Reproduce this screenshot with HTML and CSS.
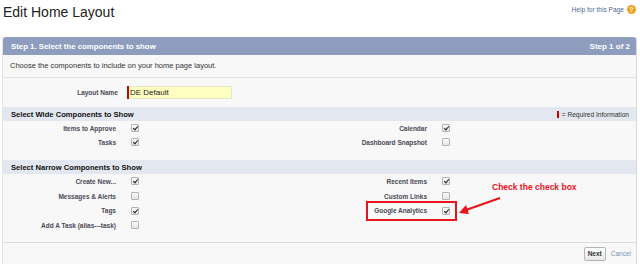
FILE: index.html
```html
<!DOCTYPE html>
<html lang="en">
<head>
    <meta charset="UTF-8">
    <title>Edit Home Layout</title>
    <link rel="stylesheet" href="styles.css">
</head>
<body>
    <div class="page-head">
        <h1>Edit Home Layout</h1>
        <a class="help" href="#">Help for this Page <span class="help-icon">?</span></a>
    </div>

    <div class="panel">
        <div class="panel-head">
            <h2>Step 1. Select the components to show</h2>
            <span class="step">Step 1 of 2</span>
        </div>
        <div class="panel-desc">Choose the components to include on your home page layout.</div>

        <!-- layout name -->
        <div class="name-row">
            <label class="label" for="layoutName">Layout Name</label>
            <div class="required-input">
                <input type="text" id="layoutName" value="DE Default">
            </div>
        </div>

        <div class="section-head">
            <h3>Select Wide Components to Show</h3>
            <span class="req-note"><i class="req-bar"></i> = Required Information</span>
        </div>
        <div class="grid">
            <span class="label">Items to Approve</span><span class="data"><span class="cb on"></span></span>
            <span class="label">Calendar</span><span class="data"><span class="cb on"></span></span>
            <span class="label">Tasks</span><span class="data"><span class="cb on"></span></span>
            <span class="label">Dashboard Snapshot</span><span class="data"><span class="cb"></span></span>
        </div>

        <div class="section-head">
            <h3>Select Narrow Components to Show</h3>
        </div>
        <div class="grid narrow">
            <span class="label">Create New...</span><span class="data"><span class="cb on"></span></span>
            <span class="label">Recent Items</span><span class="data"><span class="cb on"></span></span>
            <span class="label">Messages &amp; Alerts</span><span class="data"><span class="cb"></span></span>
            <span class="label">Custom Links</span><span class="data"><span class="cb"></span></span>
            <span class="label">Tags</span><span class="data"><span class="cb on"></span></span>
            <span class="label">Google Analytics</span><span class="data"><span class="cb on"></span></span>
            <span class="label">Add A Task (alias---task)</span><span class="data"><span class="cb"></span></span>

            <!-- annotation -->
            <div class="callout-box"></div>
            <svg class="callout-arrow" width="44" height="20" viewBox="0 0 44 20">
                <line x1="42" y1="2" x2="8" y2="14" stroke="#e8141c" stroke-width="2"/>
                <polygon points="1,17 8,9 11,18" fill="#e8141c"/>
            </svg>
            <span class="callout-text">Check the check box</span>
        </div>

        <div class="panel-foot">
            <button class="btn">Next</button>
            <a class="cancel" href="#">Cancel</a>
        </div>
    </div>
</body>
</html>
```

FILE: styles.css
```css
body {
    margin: 0;
    background-color: #fff;
    font-family: "Liberation Sans", Arial, sans-serif;
    color: #333;
}
.page-head {
    display: flex;
    justify-content: space-between;
    height: 37px;
    padding: 0 4px 0 3px;
}
h1 {
    margin: 4px 0 0 0;
    font-size: 14px;
    font-weight: normal;
    line-height: 16px;
    color: #222;
}
.help {
    margin-top: 5px;
    display: flex;
    align-items: flex-start;
    gap: 3px;
    font-size: 6.6px;
    line-height: 9px;
    color: #4f6a98;
    text-decoration: none;
}
.help-icon {
    width: 9px;
    height: 9px;
    border-radius: 50%;
    background-color: #eda21f;
    color: #fff;
    font-size: 7px;
    font-weight: bold;
    line-height: 9px;
    text-align: center;
}
.panel {
    margin-left: 2px;
    width: 633px;
    background-color: #f8f8f8;
    border-right: 1px solid #dadada;
    border-left: 1px solid #e4e4e4;
}
.panel-head {
    display: flex;
    justify-content: space-between;
    align-items: center;
    height: 18px;
    padding: 0 6px 0 8px;
    background-color: #8e9dbe;
    border-radius: 3px 3px 0 0;
    color: #fff;
}
h2 {
    margin: 0;
    font-size: 7.8px;
    font-weight: bold;
}
.step {
    font-size: 8px;
    font-weight: bold;
}
.panel-desc {
    height: 22px;
    line-height: 22px;
    padding-left: 7px;
    font-size: 7.5px;
    color: #333;
    border-bottom: 1px solid #e3e3e3;
}
.label {
    padding-right: 6px;
    text-align: right;
    font-size: 6.5px;
    font-weight: bold;
    color: #4a4a56;
}
.name-row {
    display: grid;
    grid-template-columns: 119px 1fr;
    align-items: center;
    height: 29px;
}
.name-row .label {
    padding-right: 4px;
}
.required-input {
    display: flex;
    margin-left: 5px;
    width: 103px;
    height: 13px;
    border-left: 2px solid #c00;
}
.required-input input {
    display: block;
    box-sizing: border-box;
    width: 100%;
    height: 13px;
    margin: 0;
    padding: 0 0 0 1px;
    border: 1px solid #e6e6c8;
    border-left: none;
    outline: none;
    background-color: #ffffc2;
    font-family: "Liberation Sans", Arial, sans-serif;
    font-size: 8px;
    line-height: 11px;
    color: #222;
}
.section-head {
    display: flex;
    justify-content: space-between;
    align-items: center;
    height: 14px;
    padding: 0 7px 0 8px;
    background-color: #e3e7ef;
}
h3 {
    margin: 0;
    font-size: 7.6px;
    font-weight: bold;
    color: #111;
}
.req-note {
    display: flex;
    align-items: center;
    gap: 3px;
    font-size: 6.6px;
    color: #333;
}
.req-bar {
    width: 2px;
    height: 7px;
    background-color: #c00;
}
.grid {
    position: relative;
    display: grid;
    grid-template-columns: 119px 191px 120px 1fr;
    grid-auto-rows: 14px;
    align-items: center;
    padding-bottom: 11px;
}
.grid.narrow {
    grid-auto-rows: 14.7px;
    padding-bottom: 9px;
    border-bottom: 1px solid #dcdcdc;
}
.data {
    display: flex;
    align-items: center;
    padding-left: 9px;
}
.cb {
    position: relative;
    box-sizing: border-box;
    width: 8px;
    height: 8px;
    border: 1px solid #b4b4b4;
    border-radius: 1px;
    background: linear-gradient(#fafafa, #e4e4e4);
}
.cb.on::after {
    content: "";
    position: absolute;
    left: 2px;
    top: 0px;
    width: 2px;
    height: 4px;
    border-right: 1.3px solid #222;
    border-bottom: 1.3px solid #222;
    transform: rotate(40deg);
}
.callout-box {
    position: absolute;
    left: 363px;
    top: 27px;
    width: 87px;
    height: 16px;
    border: 2px solid #e8141c;
}
.callout-arrow {
    position: absolute;
    left: 455px;
    top: 22px;
}
.callout-text {
    position: absolute;
    left: 489px;
    top: 8px;
    font-size: 8.5px;
    font-weight: bold;
    color: #e8141c;
}
.panel-foot {
    display: flex;
    justify-content: flex-end;
    align-items: center;
    gap: 5px;
    height: 22px;
    padding-right: 5px;
}
.btn {
    height: 14px;
    padding: 0 3px;
    border: 1px solid #b5b5b5;
    border-radius: 2px;
    background: linear-gradient(#fff, #e8e8e8);
    font-family: "Liberation Sans", Arial, sans-serif;
    font-size: 6.5px;
    font-weight: bold;
    color: #333;
}
.cancel {
    font-size: 6.5px;
    color: #7c8fb4;
    text-decoration: none;
}
```
